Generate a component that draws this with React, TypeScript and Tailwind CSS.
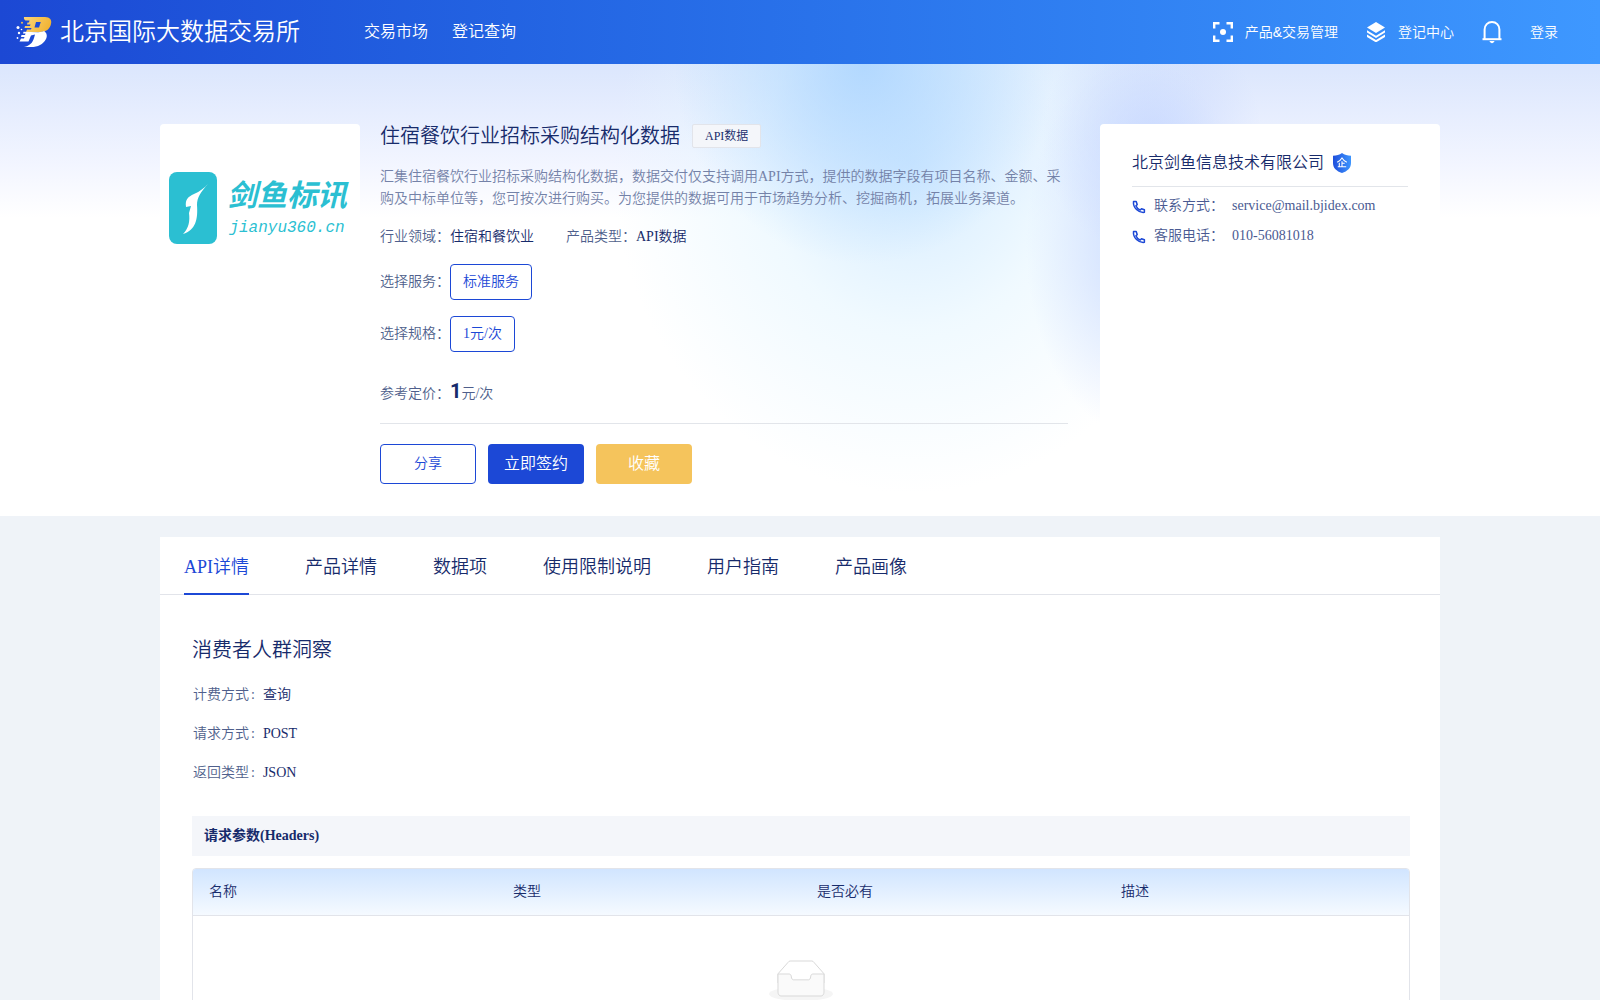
import React from 'react';

const navLinks = ['交易市场', '登记查询'];

const tabs = ['API详情', '产品详情', '数据项', '使用限制说明', '用户指南', '产品画像'];

const contacts = [
  { label: '联系方式：', value: 'service@mail.bjidex.com' },
  { label: '客服电话：', value: '010-56081018' },
];

const apiInfo = [
  { label: '计费方式', value: '查询' },
  { label: '请求方式', value: 'POST' },
  { label: '返回类型', value: 'JSON' },
];

const columns = ['名称', '类型', '是否必有', '描述'];

const BrandLogo = () => (
  <svg className="h-8 w-9" viewBox="0 0 36 32" fill="none" aria-hidden="true">
    <defs>
      <linearGradient id="brandGold" x1="8" y1="2" x2="34" y2="16" gradientUnits="userSpaceOnUse">
        <stop stopColor="#fbd478" />
        <stop offset="1" stopColor="#f0b02c" />
      </linearGradient>
    </defs>
    <path
      fill="url(#brandGold)"
      fillRule="evenodd"
      d="M8 1H29C34 1 36 4 35 8C34 13 30 16 24 16H10L11 13.500H15L15.500 12H8.500L9 10H14L14.500 8.500H11L11.500 6.500H13L13.500 4.500H10C8.500 4.500 7.500 2.500 8 1ZM20 6L18.500 11.500H23L24.800 6Z"
    />
    <path
      fill="#fff"
      d="M28 15C31 17 31.500 20 30 23C27 28.500 22 31 15 31H8C14 29.500 16.500 27 18 22L19 18.500L15 19.500L12.500 25.500H3.500L5 22.500H8L8.500 21H5L5.500 19H9L9.500 17.500H7L7.500 15.800L22 16.200C25 16 27 15.800 28 15Z"
    />
    <circle cx="2" cy="11.500" r="1.500" fill="#fff" />
    <circle cx="3" cy="17" r="1.200" fill="#fff" />
    <circle cx="1.500" cy="22" r="0.900" fill="#fff" />
    <circle cx="6" cy="6.800" r="1" fill="#f5bf4d" />
    <circle cx="5.500" cy="13.500" r="0.800" fill="#fff" />
  </svg>
);

const ScanIcon = () => (
  <svg className="h-5 w-5" viewBox="0 0 20 20" fill="none" stroke="#fff" strokeWidth="2.400" aria-hidden="true">
    <path d="M1.200 6.500V1.200H6.500M13.500 1.200H18.800V6.500M18.800 13.500V18.800H13.500M6.500 18.800H1.200V13.500" />
    <circle cx="10" cy="10" r="3" fill="#fff" stroke="none" />
  </svg>
);

const LayersIcon = () => (
  <svg className="h-5 w-5" viewBox="0 0 20 20" fill="#fff" aria-hidden="true">
    <path d="M10 0L19 5.500L10 11L1 5.500Z" />
    <path d="M1 8.200L10 13.700L19 8.200V10.600L10 16.100L1 10.600Z" />
    <path d="M1 12.600L10 18L19 12.600V15L10 20.400L1 15Z" />
  </svg>
);

const BellIcon = () => (
  <svg className="h-6 w-5" viewBox="0 0 20 24" fill="none" aria-hidden="true">
    <path d="M2.600 19V9.500C2.600 5.200 5.800 2 10 2C14.200 2 17.400 5.200 17.400 9.500V19" stroke="#fff" strokeWidth="2" />
    <path d="M0.500 19.200H19.500" stroke="#fff" strokeWidth="2" />
    <path d="M7.500 21H12.500C12 22.400 11 23.200 10 23.200C9 23.200 8 22.400 7.500 21Z" fill="#fff" />
  </svg>
);

const PhoneIcon = () => (
  <svg className="mt-0.5 h-3.5 w-3.5" viewBox="0 0 14 14" fill="none" stroke="#1c48d6" strokeWidth="1.500" strokeLinejoin="round" aria-hidden="true">
    <path d="M1.500 1.600H4.200L5.200 4.600L3.900 5.700C4.700 7.600 6.200 9.200 8.300 10.100L9.500 8.800L12.400 9.800V12.300C6.500 13.100 0.900 7.600 1.500 1.600Z" />
  </svg>
);

const CompanyBadge = () => (
  <svg className="h-5 w-5" viewBox="0 0 20 20" aria-hidden="true">
    <defs>
      <linearGradient id="badgeBlue" x1="0" y1="0" x2="1" y2="0">
        <stop stopColor="#1f4fdc" />
        <stop offset="1" stopColor="#3d95fe" />
      </linearGradient>
    </defs>
    <path fill="url(#badgeBlue)" d="M10 0C12.500 1.800 15.500 2.600 19 2.800V10C19 15 15.500 18.200 10 20C4.500 18.200 1 15 1 10V2.800C4.500 2.600 7.500 1.800 10 0Z" />
    <path d="M5.200 9.200C7.300 8.200 9 6.700 10 5C11 6.700 12.700 8.200 14.800 9.200M10 8.200V13.500M10 10.300H12.700M7.300 9.800V13.500M5.800 13.700H14.200" fill="none" stroke="#fff" strokeWidth="1.100" />
  </svg>
);

const JianyuLogo = () => (
  <div className="flex items-center gap-2.5 text-[#2bbfd2]">
    <svg className="h-[72px] w-12 shrink-0" viewBox="0 0 48 72" aria-hidden="true">
      <rect width="48" height="72" rx="8" fill="currentColor" />
      <path fill="#fff" d="M39 12C32 20 28 25 28 33C29 47 27 58 14 62C20 56 21 49 20 41L22 34L17 35C16 27 19 25 25 22C31 19.500 35 16 39 12Z" />
    </svg>
    <div className="flex flex-col items-center whitespace-nowrap">
      <span className="text-[30px] leading-10 font-bold italic">剑鱼标讯</span>
      <span className="font-['Liberation_Mono',monospace] text-base leading-6 italic">jianyu360.cn</span>
    </div>
  </div>
);

const EmptyIcon = () => (
  <svg width="64" height="41" viewBox="0 0 64 41" aria-hidden="true">
    <g transform="translate(0 1)" fill="none" fillRule="evenodd">
      <ellipse fill="#f5f5f5" cx="32" cy="33" rx="32" ry="7" />
      <g fillRule="nonzero" stroke="#d9d9d9">
        <path d="M55 12.760L44.854 1.258C44.367 0.474 43.656 0 42.907 0H21.093c-0.749 0-1.460 0.474-1.947 1.257L9 12.761V22h46v-9.240z" />
        <path
          d="M41.613 15.931c0-1.605 0.994-2.930 2.227-2.931H55v18.137C55 33.260 53.680 35 52.050 35h-40.100C10.320 35 9 33.259 9 31.137V13h11.160c1.233 0 2.227 1.323 2.227 2.928v0.022c0 1.605 1.005 2.901 2.237 2.901h14.752c1.232 0 2.237-1.308 2.237-2.913v-0.007z"
          fill="#fafafa"
        />
      </g>
    </g>
  </svg>
);

const Header = () => (
  <header className="flex h-16 items-center bg-linear-to-r from-[#1c48d4] to-[#3e98ff] px-4 font-['Liberation_Sans','Noto_Sans_CJK_SC',sans-serif] text-white">
    <a href="#" className="flex items-center gap-2">
      <BrandLogo />
      <span className="text-2xl">北京国际大数据交易所</span>
    </a>
    <nav className="ml-16 flex gap-6">
      {navLinks.map((name) => (
        <a key={name} href="#" className="text-base">
          {name}
        </a>
      ))}
    </nav>
    <div className="ml-auto flex items-center gap-7 pr-6.5 text-sm">
      <a href="#" className="flex items-center gap-3">
        <ScanIcon />
        产品&amp;交易管理
      </a>
      <a href="#" className="flex items-center gap-3">
        <LayersIcon />
        登记中心
      </a>
      <button type="button" aria-label="消息">
        <BellIcon />
      </button>
      <a href="#">登录</a>
    </div>
  </header>
);

const ProductSummary = () => (
  <section className="min-w-0 flex-1">
    <div className="flex items-center gap-3">
      <h1 className="text-xl leading-6">住宿餐饮行业招标采购结构化数据</h1>
      <span className="h-6 rounded-xs border border-[#e2e4ea] bg-[#f4f6fa] px-3 text-xs leading-[22px]">API数据</span>
    </div>
    <p className="mt-[18px] text-sm leading-[22px] text-[#7482a8]">
      汇集住宿餐饮行业招标采购结构化数据，数据交付仅支持调用API方式，提供的数据字段有项目名称、金额、采购及中标单位等，您可按次进行购买。为您提供的数据可用于市场趋势分析、挖掘商机，拓展业务渠道。
    </p>
    <dl className="mt-4 flex gap-8 text-sm leading-[22px]">
      <div className="flex">
        <dt className="text-[#4f5f8c]">行业领域：</dt>
        <dd>住宿和餐饮业</dd>
      </div>
      <div className="flex">
        <dt className="text-[#4f5f8c]">产品类型：</dt>
        <dd>API数据</dd>
      </div>
    </dl>
    <div className="mt-4 flex items-center text-sm">
      <span className="text-[#4f5f8c]">选择服务：</span>
      <button type="button" className="h-9 rounded border border-[#1c48d6] bg-white px-3 text-[#1c48d6]">
        标准服务
      </button>
    </div>
    <div className="mt-4 flex items-center text-sm">
      <span className="text-[#4f5f8c]">选择规格：</span>
      <button type="button" className="h-9 rounded border border-[#1c48d6] bg-white px-3 text-[#1c48d6]">
        1元/次
      </button>
    </div>
    <div className="mt-6 flex items-baseline border-b border-[#e2e5ea] pb-3.5 text-sm leading-[30px] text-[#4f5f8c]">
      参考定价：
      <strong className="font-['Liberation_Sans_Narrow',Roboto,sans-serif] text-xl leading-[30px] text-[#172b6b]">1</strong>
      元/次
    </div>
    <div className="mt-5 flex gap-3">
      <button type="button" className="h-10 w-24 rounded border border-[#1c48d6] bg-white text-sm text-[#1c48d6]">
        分享
      </button>
      <button type="button" className="h-10 w-24 rounded bg-[#1c48d6] text-base text-white">
        立即签约
      </button>
      <button type="button" className="h-10 w-24 rounded bg-[#f5c45c] text-base text-white">
        收藏
      </button>
    </div>
  </section>
);

const CompanyCard = () => (
  <aside className="w-[340px] shrink-0 rounded bg-white px-8 pt-6.5 pb-6">
    <div className="flex items-center gap-2 border-b border-[#e2e5ea] pb-2.5">
      <h2 className="text-base leading-[26px]">北京剑鱼信息技术有限公司</h2>
      <CompanyBadge />
    </div>
    <dl className="mt-2 flex flex-col gap-2 text-sm leading-[22px] text-[#4a5a92]">
      {contacts.map((item) => (
        <div key={item.label} className="flex items-center">
          <PhoneIcon />
          <dt className="ml-2">{item.label}</dt>
          <dd className="ml-2">{item.value}</dd>
        </div>
      ))}
    </dl>
  </aside>
);

const Details = () => (
  <main className="mx-auto mt-[21px] max-w-[1280px] bg-white">
    <div role="tablist" className="flex gap-14 border-b border-[#e2e4ea] px-6">
      {tabs.map((name, index) => (
        <button
          key={name}
          type="button"
          role="tab"
          aria-selected={index === 0}
          className={
            index === 0
              ? '-mb-px h-[58px] border-b-2 border-[#1c48d6] pt-1 text-lg text-[#1c48d6]'
              : '-mb-px h-[58px] border-b-2 border-transparent pt-1 text-lg'
          }
        >
          {name}
        </button>
      ))}
    </div>
    <div className="pt-[41px] pr-7.5 pb-8 pl-8">
      <h2 className="text-xl leading-7">消费者人群洞察</h2>
      <dl className="mt-5 flex flex-col gap-[17px] pl-px text-sm leading-[22px]">
        {apiInfo.map((item) => (
          <div key={item.label} className="flex">
            <dt className="text-[#4f5f8c]">{item.label}</dt>
            <dd className="flex gap-2">
              <span className="ml-0.5 text-[#4f5f8c]">:</span>
              {item.value}
            </dd>
          </div>
        ))}
      </dl>
      <h3 className="mt-8 bg-[#f4f6fa] px-3 text-sm leading-10 font-bold">请求参数(Headers)</h3>
      <div className="mt-3 overflow-hidden rounded border border-[#e2e4ea]">
        <table className="w-full table-fixed border-separate border-spacing-0 text-left text-sm">
          <thead>
            <tr>
              {columns.map((name) => (
                <th
                  key={name}
                  className="h-[47px] border-b border-[#e2e4ea] bg-linear-to-b from-[#d1e5ff] to-[#f5faff] px-4 py-0 font-[350]"
                >
                  {name}
                </th>
              ))}
            </tr>
          </thead>
          <tbody>
            <tr>
              <td colSpan={4} className="px-0 py-11">
                <div className="flex justify-center">
                  <EmptyIcon />
                </div>
              </td>
            </tr>
          </tbody>
        </table>
      </div>
    </div>
  </main>
);

export default function App() {
  return (
    <div className="min-h-screen bg-[#eff3f8] font-['Liberation_Serif','Noto_Sans_CJK_SC',serif] font-[350] text-[#172b6b]">
      <Header />
      {/* Soft colour blobs sit behind the product summary */}
      <div className="bg-white bg-[radial-gradient(190px_200px_at_54%_0%,#a8d3ffcc,#a8d3ff00),radial-gradient(110px_120px_at_72%_16%,#c8d8ffcc,#c8d8ff00),radial-gradient(110px_190px_at_71%_40%,#c6d8ffdd,#c6d8ff00),radial-gradient(300px_330px_at_57%_22%,#d2eaffee,#e6f6ff99_50%,#f4fcff00),linear-gradient(to_bottom,#dbe6fd,#f2f5ff_22%,#ffffff_34%)] pt-[60px] pb-8">
        <div className="mx-auto flex max-w-[1280px]">
          <div className="mr-5 flex h-[200px] w-[200px] shrink-0 items-center justify-center rounded bg-white pr-1 pb-8">
            <JianyuLogo />
          </div>
          <ProductSummary />
          <div className="ml-8 flex">
            <CompanyCard />
          </div>
        </div>
      </div>
      <Details />
    </div>
  );
}
